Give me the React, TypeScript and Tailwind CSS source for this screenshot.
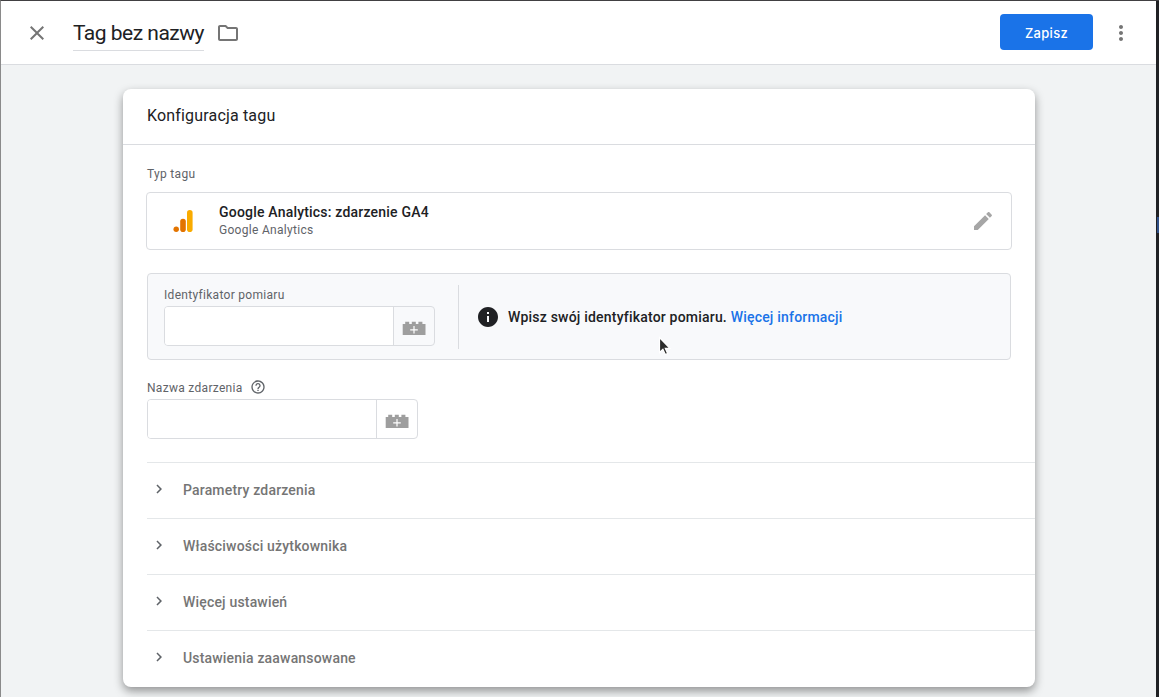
import type { ReactNode } from "react";

const SECTIONS = ["Parametry zdarzenia", "Właściwości użytkownika", "Więcej ustawień", "Ustawienia zaawansowane"];

interface IconProps {
    d: string;
    className?: string;
}

function Icon({ d, className }: IconProps) {
    return (
        <svg className={className} viewBox="0 0 24 24" fill="currentColor">
            <path d={d} />
        </svg>
    );
}

function BrickIcon() {
    return (
        <svg className="mt-[3px] h-[14px] w-[24px]" viewBox="0 0 24 14">
            <path fill="#9e9e9e" d="M.7 3H3.2V.7h4V3h2.6V.7h4V3h2.6V.7h4V3h3.1v11H.7z" />
            <path stroke="#fff" strokeWidth="1.2" d="M12 5v7.6M8.2 8.8h7.6" />
        </svg>
    );
}

function VariableInput() {
    return (
        <div className="flex h-10 w-[271px] rounded-[4px] border border-[#dadce0]">
            <input className="w-[228px] rounded-l-[3px] bg-white outline-none" />
            <button className="flex flex-1 items-center justify-center border-l border-[#dadce0]">
                <BrickIcon />
            </button>
        </div>
    );
}

function Label({ children }: { children: ReactNode }) {
    return <div className="text-xs leading-4 tracking-[0.3px] text-[#5f6368]">{children}</div>;
}

function Header() {
    return (
        <header className="flex h-16 items-center border-b border-[#dadce0] bg-white pr-[23px] pl-6">
            <Icon
                className="size-6 text-[#757575]"
                d="M19 6.41 17.59 5 12 10.59 6.41 5 5 6.41 10.59 12 5 17.59 6.41 19 12 13.41 17.59 19 19 17.59 13.41 12z"
            />
            <h1 className="mt-px ml-6 h-[35px] w-[131px] border-b border-[#dadce0] text-[21px] leading-[35px] tracking-[-0.5px] whitespace-nowrap text-[#202124]">
                Tag bez nazwy
            </h1>
            <Icon
                className="ml-3 size-6 text-[#757575]"
                d="M9.17 6l2 2H20v10H4V6h5.17M10 4H4c-1.1 0-1.99.9-1.99 2L2 18c0 1.1.9 2 2 2h16c1.1 0 2-.9 2-2V8c0-1.1-.9-2-2-2h-8l-2-2z"
            />
            <button className="mb-px ml-auto h-9 w-[93px] rounded-[4px] bg-[#1a73e8] pt-[3px] font-[Inter,sans-serif] text-[13px] font-medium tracking-[0.3px] text-white">
                Zapisz
            </button>
            <Icon
                className="ml-4 size-6 text-[#757575]"
                d="M12 8c1.1 0 2-.9 2-2s-.9-2-2-2-2 .9-2 2 .9 2 2 2zm0 2c-1.1 0-2 .9-2 2s.9 2 2 2 2-.9 2-2-.9-2-2-2zm0 6c-1.1 0-2 .9-2 2s.9 2 2 2 2-.9 2-2-.9-2-2-2z"
            />
        </header>
    );
}

function TagType() {
    return (
        <div className="-ml-px flex h-[58px] w-[866px] items-center rounded-[4px] border border-[#dadce0] pr-4 pl-[26px]">
            <svg className="h-6 w-5" viewBox="0 0 20 24">
                <rect x="14" y="1" width="5.6" height="22" rx="2.8" fill="#f9ab00" />
                <rect x="7.2" y="9.8" width="5.6" height="13.2" rx="2.8" fill="#e37400" />
                <circle cx="3.2" cy="20.3" r="2.7" fill="#e37400" />
            </svg>
            <div className="mb-0.5 ml-[26px]">
                <div className="text-sm leading-[19px] font-medium tracking-[0.2px] text-[#202124]">
                    Google Analytics: zdarzenie GA4
                </div>
                <div className="text-xs leading-4 tracking-[0.3px] text-[#5f6368]">Google Analytics</div>
            </div>
            <Icon
                className="ml-auto size-6 text-[#a6a6a6]"
                d="M3 17.25V21h3.75L17.81 9.94l-3.75-3.75L3 17.25zM20.71 7.04c.39-.39.39-1.02 0-1.41l-2.34-2.34c-.39-.39-1.02-.39-1.41 0l-1.83 1.83 3.75 3.75 1.83-1.83z"
            />
        </div>
    );
}

function MeasurementId() {
    return (
        <div className="relative mt-[23px] flex h-[87px] w-[864px] rounded-[4px] border border-[#dadce0] bg-[#f8f9fb] pl-4">
            <div className="pt-[13px]">
                <Label>Identyfikator pomiaru</Label>
                <div className="mt-[3px]">
                    <VariableInput />
                </div>
            </div>
            <div className="mt-[11px] ml-[23px] h-16 w-px bg-[#dadce0]" />
            <div className="ml-[17px] flex items-center gap-2 text-sm font-medium tracking-[0.2px] text-[#202124]">
                <Icon
                    className="size-6"
                    d="M12 2C6.48 2 2 6.48 2 12s4.48 10 10 10 10-4.48 10-10S17.52 2 12 2zm1 15h-2v-6h2v6zm0-8h-2V7h2v2z"
                />
                <span>
                    Wpisz swój identyfikator pomiaru. <a className="text-[#1a73e8]">Więcej informacji</a>
                </span>
            </div>
            {/* Mouse pointer */}
            <svg className="absolute top-[62px] left-[510px] h-[21px] w-[14px]" viewBox="0 0 14 21">
                <path
                    d="M1.5 1.5v15l3.4-3.2 2.4 5.2 2.3-1-2.3-5.1h4.6z"
                    fill="#2b2b2b"
                    stroke="#fff"
                    strokeWidth="1.2"
                />
            </svg>
        </div>
    );
}

export default function App() {
    return (
        <div className="flex h-[697px] w-[1159px] overflow-hidden border-t border-l border-t-[#414042] border-l-[#8a8a8a] bg-[#f1f3f4] font-[Roboto,sans-serif]">
            <div className="flex flex-1 flex-col">
                <Header />
                <main className="mt-6 ml-[122px] h-[598px] w-[912px] shrink-0 rounded-lg bg-white shadow-[0_4px_10px_rgba(0,0,0,0.4)]">
                    <h2 className="h-14 border-b border-[#dadce0] pl-6 text-base leading-[53px] tracking-[0.17px] text-[#202124]">
                        Konfiguracja tagu
                    </h2>
                    <div className="pt-[21px] pl-6">
                        <Label>Typ tagu</Label>
                        <div className="mt-[10px]">
                            <TagType />
                        </div>
                        <MeasurementId />
                        <div className="mt-5 mb-[3px] flex h-4 items-center gap-[7px]">
                            <Label>Nazwa zdarzenia</Label>
                            <Icon
                                className="mb-0.5 size-4 text-[#5f6368]"
                                d="M11 18h2v-2h-2v2zm1-16C6.48 2 2 6.48 2 12s4.48 10 10 10 10-4.48 10-10S17.52 2 12 2zm0 18c-4.41 0-8-3.59-8-8s3.59-8 8-8 8 3.59 8 8-3.59 8-8 8zm0-14c-2.21 0-4 1.79-4 4h2c0-1.1.9-2 2-2s2 .9 2 2c0 2-3 1.75-3 5h2c0-2.25 3-2.5 3-5 0-2.21-1.79-4-4-4z"
                            />
                        </div>
                        <VariableInput />
                        <div className="mt-[23px]">
                            {SECTIONS.map((title) => (
                                <div
                                    key={title}
                                    className="flex h-14 items-center border-t border-[#e4e7e9] pb-[3px] pl-[3px]"
                                >
                                    <Icon
                                        className="size-[18px] text-[#5f6368]"
                                        d="M10 6 8.59 7.41 13.17 12l-4.58 4.59L10 18l6-6z"
                                    />
                                    <span className="mt-0.5 ml-[15px] text-sm font-medium tracking-[0.18px] text-[#757575]">
                                        {title}
                                    </span>
                                </div>
                            ))}
                        </div>
                    </div>
                </main>
            </div>
            {/* Window edge */}
            <div className="w-[3px] bg-[#202124] pt-[216px] pl-px">
                <div className="h-4 bg-[#2f4f86]" />
            </div>
        </div>
    );
}
